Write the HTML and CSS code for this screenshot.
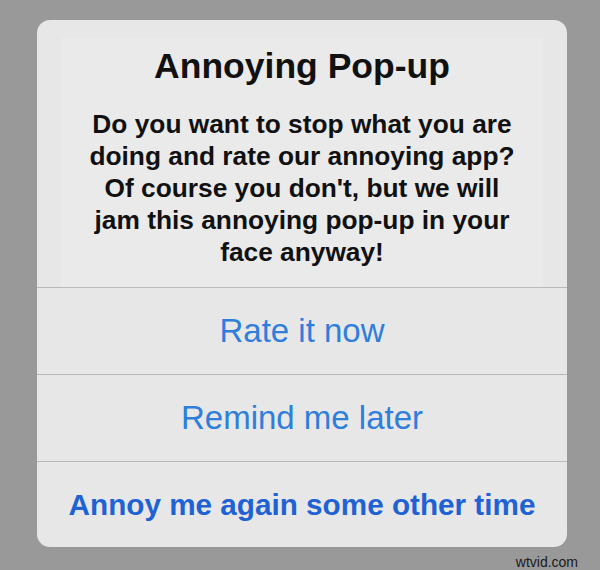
FILE: index.html
```html
<!DOCTYPE html>
<html lang="en">
<head>
    <meta charset="UTF-8">
    <meta name="viewport" content="width=device-width, initial-scale=1.0">
    <title>Annoying Pop-up</title>
    <link rel="stylesheet" href="styles.css">
</head>
<body>
    <div class="alert">
        <div class="alert-body">
            <h1>Annoying Pop-up</h1>
            <p>Do you want to stop what you are<br>
               doing and rate our annoying app?<br>
               Of course you don't, but we will<br>
               jam this annoying pop-up in your<br>
               face anyway!</p>
        </div>
        <button class="alert-btn">Rate it now</button>
        <button class="alert-btn">Remind me later</button>
        <button class="alert-btn cancel">Annoy me again some other time</button>
    </div>
    <div class="credit">wtvid.com</div>
</body>
</html>
```

FILE: styles.css
```css
body {
    margin: 0;
    padding-top: 20px;
    background: #999999;
    font-family: 'Liberation Sans', Arial, Helvetica, sans-serif;
}
.alert {
    width: 530px;
    margin-left: 37px;
    background: #e7e7e7;
    border-radius: 13px;
    overflow: hidden;
    display: flex;
    flex-direction: column;
}
.alert-body {
    margin: 18px 24px 0;
    padding: 8px 0 19px;
    background: #eaeaea;
    text-align: center;
    color: #111;
}
h1 {
    margin: 0 0 22px;
    font-size: 35.5px;
    line-height: 40px;
    font-weight: bold;
}
p {
    margin: 0 -10px;
    font-size: 26.3px;
    line-height: 32px;
    font-weight: bold;
}
.alert-btn {
    border: none;
    border-top: 1px solid #b9b9b9;
    background: transparent;
    height: 87px;
    padding: 0;
    font-family: inherit;
    font-size: 33px;
    line-height: 86px;
    color: #2f7edb;
    cursor: pointer;
}
.alert-btn.cancel {
    height: 86px;
    line-height: 85px;
    font-size: 29.7px;
    font-weight: bold;
    color: #1e62d4;
}
.credit {
    width: 578px;
    text-align: right;
    font-size: 14px;
    line-height: 16px;
    margin-top: 7px;
    color: #1a1a1a;
}
```
